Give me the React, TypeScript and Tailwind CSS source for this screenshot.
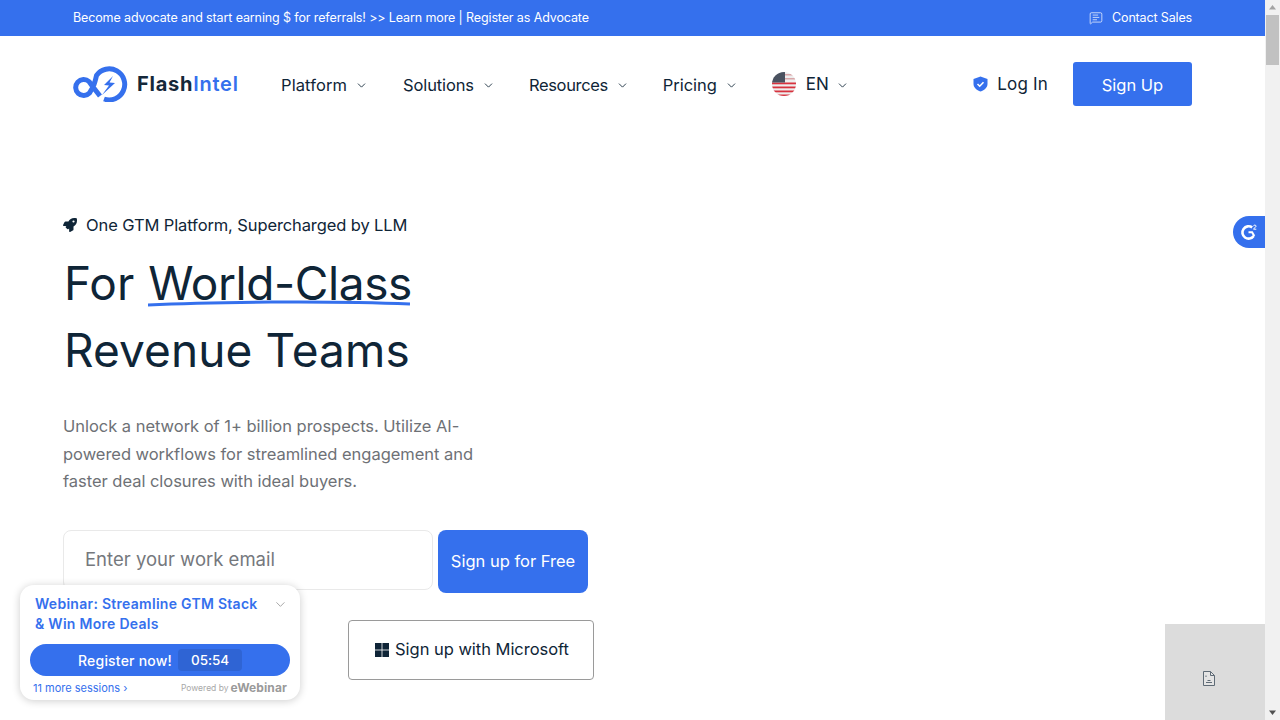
import React from "react";
import { ChevronDown, MessageSquareText } from "lucide-react";
import { FaRocket } from "react-icons/fa";

const Logo = () => (
  <svg width="56" height="36" viewBox="0 0 56 36" fill="none">
    <path
      d="M31 33 A15.500 15.500 0 1 0 23.500 9.500 C22.500 14 21.500 18 20 21 L16.500 27 A8 8 0 1 1 16 15.500 L20 21 L27 30"
      stroke="#3570ed"
      strokeWidth="5"
      strokeLinejoin="round"
    />
    <path d="M40 10 L31 19 L36 19.500 L29 29 L42 17 L36.500 16.500 Z" fill="#3570ed" />
  </svg>
);

const Flag = () => (
  <svg width="24" height="24" viewBox="0 0 24 24">
    <defs>
      <clipPath id="flag-circle"><circle cx="12" cy="12" r="12" /></clipPath>
    </defs>
    <g clipPath="url(#flag-circle)">
      <rect width="24" height="24" fill="#eeeeee" />
      <rect x="13" y="2" width="11" height="1.500" fill="#d9a5a8" />
      <rect x="13" y="6" width="11" height="1.500" fill="#d9a5a8" />
      <rect y="10.500" width="24" height="1.800" fill="#d8333f" />
      <rect y="14.500" width="24" height="1.800" fill="#d8333f" />
      <rect y="18.500" width="24" height="1.800" fill="#d8333f" />
      <rect y="22.500" width="24" height="1.500" fill="#d8333f" />
      <rect width="13" height="10.500" fill="#4a5260" />
    </g>
  </svg>
);

const NavItem = ({ label, className, tracking }: { label: string; className: string; tracking: string }) => (
  <div className={`flex items-center pt-[2px] ${className}`}>
    <span className={`text-[16.500px] text-[#0f2537] ${tracking}`}>{label}</span>
    <ChevronDown size={13} strokeWidth={1.600} className="ml-[8px] text-[#0f2537]" />
  </div>
);

const G2 = () => (
  <svg width="18" height="18" viewBox="0 0 18 18" fill="none">
    <path d="M12.200 4.400A6.200 6.200 0 1 0 13.700 13" stroke="#fff" strokeWidth="2.600" />
    <path d="M8.500 9.200h3.600l2.200 3.800" stroke="#fff" strokeWidth="2" />
    <path d="M13.500 3.200c0-1.500 2.600-1.500 2.600 0 0 1-2.400 1.800-2.600 3h2.800" stroke="#fff" strokeWidth="1" />
  </svg>
);

const BrokenFile = () => (
  <svg width="12" height="15" viewBox="0 0 12 15" fill="none" stroke="#5f6b76" strokeWidth="1">
    <path d="M.5.5h7l4 4v10H.5z" fill="#e4e4e4" />
    <path d="M7.500.5v4h4" />
    <path d="M3 11.500h6M4.500 9.500h3" />
    <path d="M3 4.500v1.500" />
  </svg>
);

export default function App() {
  return (
    <div className="relative flex h-[720px] w-[1280px] overflow-hidden bg-white font-['Inter',sans-serif] text-[#0f2537]">
      <div className="flex w-[1265px] flex-col">
        <div className="flex h-[36px] items-center justify-between bg-[#3570ed] px-[73px] text-[12.500px] text-white">
          <span className="tracking-[-0.12px]">Become advocate and start earning $ for referrals! &gt;&gt; Learn more | Register as Advocate</span>
          <div className="flex items-center gap-[9px]">
            <MessageSquareText size={14} strokeWidth={1.200} />
            <span className="tracking-[-0.15px]">Contact Sales</span>
          </div>
        </div>

        <div className="flex h-[96px] items-center px-[73px]">
          <Logo />
          <span className="ml-[8px] w-[101px] text-[20px] font-bold tracking-[0.75px] text-[#15283a]">
            Flash<span className="font-semibold text-[#3570ed]">Intel</span>
          </span>
          <NavItem label="Platform" className="ml-[43px]" tracking="tracking-[0.1px]" />
          <NavItem label="Solutions" className="ml-[35px]" tracking="tracking-[-0.12px]" />
          <NavItem label="Resources" className="ml-[34px]" tracking="tracking-[-0.35px]" />
          <NavItem label="Pricing" className="ml-[34px]" tracking="tracking-[-0.05px]" />
          <div className="ml-[34px] flex items-center">
            <Flag />
            <span className="ml-[10px] pt-[2px] text-[17px]">EN</span>
            <ChevronDown size={13} strokeWidth={1.600} className="ml-[7px] mt-[2px]" />
          </div>
          <div className="ml-auto flex items-center">
            <svg width="15" height="16" viewBox="0 0 15 16">
              <path d="M7.500.5 14.500 3v5c0 3.600-3 6.200-7 7.500C3.500 14.200.5 11.600.5 8V3z" fill="#3570ed" />
              <path d="M4.500 8l2.200 2.200 3.800-4" stroke="#fff" strokeWidth="1.600" fill="none" />
            </svg>
            <span className="ml-[9px] pt-[2px] text-[17px] tracking-[0.2px]">Log In</span>
            <button className="ml-[25px] h-[44px] w-[119px] rounded-[3px] bg-[#3570ed] pt-[2px] text-[16.500px] text-white">Sign Up</button>
          </div>
        </div>

        <main className="flex flex-col items-start pl-[64px] pt-[82px]">
          <div className="flex h-[22px] items-center text-[16.500px] tracking-[-0.11px]">
            <FaRocket size={14} className="-ml-px" />
            <span className="ml-[9px]">One GTM Platform, Supercharged by LLM</span>
          </div>
          <h1 className="mt-[14px] text-[46px] font-normal leading-[67px] text-[#0f2537]">
            For{" "}
            <span className="relative ml-px inline-block tracking-[-0.4px]">
              World-Class
              <svg className="absolute bottom-[10px] left-0" width="263" height="7" viewBox="0 0 263 7" fill="none">
                <path d="M0 5C60 2 180 .5 262 4" stroke="#3570ed" strokeWidth="3" />
              </svg>
            </span>
            <br />
            <span className="tracking-[0.1px]">Revenue Teams</span>
          </h1>
          <p className="-ml-px mt-[29px] w-[430px] text-[16.500px] leading-[27.500px] tracking-[-0.03px] text-[#6e7176]">
            Unlock a network of 1+ billion prospects. Utilize AI-
            <br />
            powered workflows for streamlined engagement and
            <br />
            faster deal closures with ideal buyers.
          </p>
          <div className="mt-[34px] flex items-start">
            <div className="-ml-px flex h-[60px] w-[370px] items-center rounded-[8px] border border-[#e9e9e9] bg-white pl-[21px] text-[18.500px] text-[#75787d]">
              Enter your work email
            </div>
            <button className="ml-[5px] h-[63px] w-[150px] rounded-[8px] bg-[#3570ed] text-[16.500px] text-white">Sign up for Free</button>
          </div>
          <div className="ml-[284px] mt-[27px] flex h-[60px] w-[246px] items-center justify-center rounded-[4px] border border-[#9a9a9a] bg-white pl-[2px] text-[16.500px]">
            <svg width="14" height="14" viewBox="0 0 14 14" fill="#0f2537" className="mr-[6px]">
              <rect width="6.600" height="6.600" />
              <rect x="7.400" width="6.600" height="6.600" />
              <rect y="7.400" width="6.600" height="6.600" />
              <rect x="7.400" y="7.400" width="6.600" height="6.600" />
            </svg>
            <span className="tracking-[-0.03px]">Sign up with Microsoft</span>
          </div>
        </main>
      </div>

      <div className="flex w-[15px] flex-col items-center bg-[#f1f1f1]">
        <svg width="15" height="15" viewBox="0 0 15 15" fill="#a3a3a3"><path d="M7.500 5 11 9.500H4z" /></svg>
        <div className="h-[50px] w-[15px] border-x border-[#f1f1f1] bg-[#c1c1c1]" />
        <div className="flex-1" />
        <svg width="15" height="15" viewBox="0 0 15 15" fill="#505050"><path d="M7.500 10 4 5.500h7z" /></svg>
      </div>

      <div className="absolute left-[1233px] top-[216px] flex h-[32px] w-[32px] items-center justify-center rounded-l-full bg-[#3570ed]">
        <G2 />
      </div>

      <div className="absolute left-[1165px] top-[624px] flex h-[96px] w-[100px] items-center justify-center bg-[#dcdcdc] pr-[12px] pt-[12px]">
        <BrokenFile />
      </div>

      <div className="absolute left-[20px] top-[585px] flex h-[115px] w-[280px] flex-col rounded-[14px] bg-white px-[10px] shadow-[0_1px_9px_rgba(0,0,0,0.2)]">
        <div className="flex items-start justify-between pl-[5px] pr-[2px] pt-[9px]">
          <div className="w-[240px] text-[14px] font-semibold leading-[20px] tracking-[0.28px] text-[#3570ed]">
            Webinar: Streamline GTM Stack
            <br />
            &amp; Win More Deals
          </div>
          <ChevronDown size={15} strokeWidth={1.500} className="mt-[3px] text-[#a0a0a0]" />
        </div>
        <div className="mt-[10px] flex h-[32px] items-center justify-center rounded-full bg-[#3570ed] text-white">
          <span className="text-[14px] font-medium tracking-[0.2px]">Register now!</span>
          <span className="ml-[6px] flex h-[22px] w-[64px] items-center justify-center rounded-[4px] bg-[#2f64d4] text-[13.500px] font-medium tracking-[-0.1px]">05:54</span>
        </div>
        <div className="mt-[3px] flex items-center justify-between px-[3px]">
          <span className="text-[11px] text-[#3570ed]">11 more sessions ›</span>
          <div className="flex items-center gap-[2px] text-[#a8a8a8]">
            <span className="text-[8.500px]">Powered by</span>
            <span className="text-[12px] font-bold tracking-[0.1px] text-[#9a9a9a]">eWebinar</span>
          </div>
        </div>
      </div>
    </div>
  );
}
